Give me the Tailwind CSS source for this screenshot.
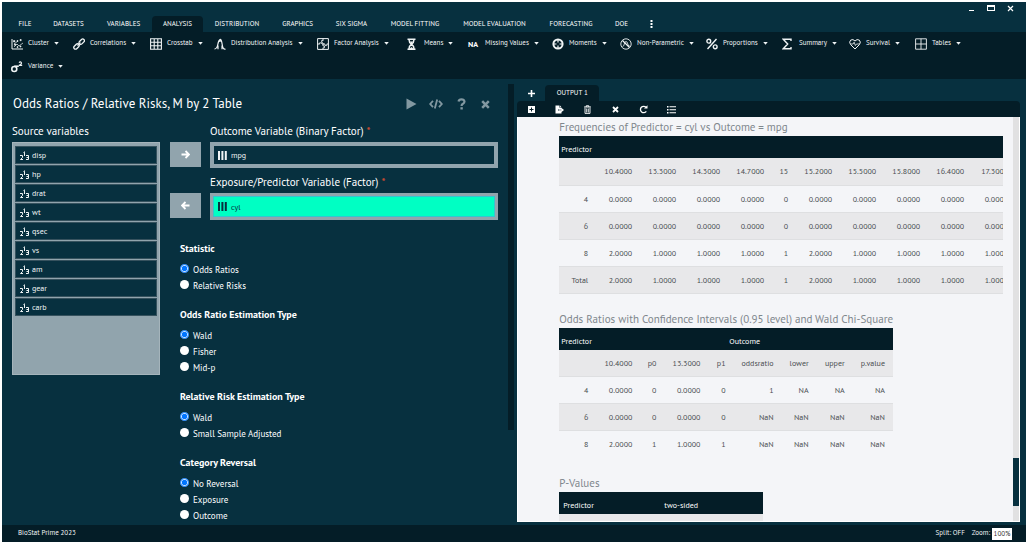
<!DOCTYPE html>
<html lang="en">
<head>
    <meta charset="UTF-8">
    <meta name="viewport" content="width=device-width, initial-scale=1.0">
    <title>BioStat Prime 2023</title>
    <script src="https://cdn.jsdelivr.net/npm/@tailwindcss/browser@4"></script>
</head>
<body class="h-screen overflow-hidden bg-white p-[2px] font-['PT_Sans','Noto_Sans',sans-serif] text-[#f0f4f5]">
    <!-- shared icons -->
    <svg class="hidden">
        <symbol id="caret" viewBox="0 0 6 4"><path d="M0 0h6L3 3.6z" fill="currentColor"/></symbol>
        <symbol id="num" viewBox="0 0 9 9"><g fill="none" stroke="currentColor" stroke-width="1"><path d="M3.500 1.500h1v3.500M4.500 .5v1"/><path d="M0 4.500h2.500v2L.5 8.500H3"/><path d="M6 4.500h2.500v4H6M6.500 6.500h2"/></g></symbol>
        <symbol id="bars" viewBox="0 0 9 9"><path d="M0 0h2v9H0zM3.4 0h2v9h-2zM6.8 0h2v9h-2z" fill="currentColor"/></symbol>
    </svg>
    <div class="flex h-full flex-col bg-[#07303f]">
        <header class="flex h-[30px] shrink-0 flex-col justify-between">
            <div class="flex h-3 items-center justify-end gap-3 pr-3 text-white">
                <button aria-label="Minimize" class="flex h-2 w-[6px] items-end"><span class="mb-px h-px w-[5px] bg-white"></span></button>
                <button aria-label="Maximize"><span class="block h-[6px] w-[8px] border border-t-2 border-white"></span></button>
                <button aria-label="Close"><svg class="h-[7px] w-[7px]" viewBox="0 0 7 7"><path d="M1 1l5 5M6 1L1 6" stroke="currentColor" stroke-width="1.2"/></svg></button>
            </div>
            <nav class="flex h-4 pl-[6px] text-[7px] font-medium text-white [&>button]:whitespace-nowrap">
                <button class="w-[34px]">FILE</button>
                <button class="w-[53px]">DATASETS</button>
                <button class="w-[57px]">VARIABLES</button>
                <button class="w-[51px] rounded-t-sm bg-[#041d27]">ANALYSIS</button>
                <button class="w-[68px]">DISTRIBUTION</button>
                <button class="w-[53px]">GRAPHICS</button>
                <button class="w-[55px]">SIX SIGMA</button>
                <button class="w-[72px]">MODEL FITTING</button>
                <button class="w-[87px]">MODEL EVALUATION</button>
                <button class="w-[66px]">FORECASTING</button>
                <button class="w-[35px]">DOE</button>
                <button aria-label="More" class="flex w-6 items-center justify-center"><svg class="h-2 w-[3px]" viewBox="0 0 3 8" fill="currentColor"><path d="M.5 0h2v2h-2zM.5 3h2v2h-2zM.5 6h2v2h-2z"/></svg></button>
            </nav>
        </header>

        <div class="flex shrink-0 flex-wrap bg-[#041d27] pb-px pl-[9px] text-[7px] font-medium [&>button]:flex [&>button]:h-[23px] [&>button]:items-center [&>button]:gap-[5px] [&>button]:whitespace-nowrap [&>button>svg:first-child]:h-3 [&>button>svg:first-child]:w-3 [&>button>svg:last-child]:h-[3px] [&>button>svg:last-child]:w-[5px]">
            <button class="w-[62px]"><svg viewBox="0 0 12 12" fill="none" stroke="currentColor"><path d="M1 1v10h11"/><path d="M3 9l3-3 2 2 4-3M3 6l4-3" stroke-width=".7"/><path d="M2.5 2.5h1.4v1.4H2.5zM6 2.5h1v1H6zM9 1.5h1.2v1.2H9zM3.4 6h1.2v1.2H3.4zM9 8h1v1H9zM6 8.6h1v1H6z" fill="currentColor" stroke-width=".6"/></svg><span>Cluster</span><svg><use href="#caret"/></svg></button>
            <button class="w-[77px]"><svg viewBox="0 0 12 12" fill="none" stroke="currentColor" stroke-width="1.3"><rect x="5.6" y="2" width="6.2" height="3.4" rx="1.7" transform="rotate(-45 8.7 3.7)"/><rect x=".4" y="6.8" width="6.2" height="3.4" rx="1.7" transform="rotate(-45 3.5 8.5)"/><path d="M4.5 7.6l3-3"/></svg><span>Correlations</span><svg><use href="#caret"/></svg></button>
            <button class="w-[64px]"><svg viewBox="0 0 12 12" fill="none" stroke="currentColor" stroke-width="1.1"><path d="M.6.8h10.8v10.4H.6zM.6 4.3h10.8M.6 7.8h10.8M4.2.8v10.4M7.8.8v10.4"/></svg><span>Crosstab</span><svg><use href="#caret"/></svg></button>
            <button class="w-[103px]"><svg viewBox="0 0 12 12" fill="none" stroke="currentColor" stroke-width="1.2"><path d="M.5 11q2.5-.2 3.3-4.5T6 1.500t2.200 5T11.500 11M6 2v2M4 7.500v3.800M8 7.500v3.800"/></svg><span>Distribution Analysis</span><svg><use href="#caret"/></svg></button>
            <button class="w-[90px]"><svg viewBox="0 0 12 12" fill="none" stroke="currentColor"><path d="M.6.6h10.8v10.8H.6zM6 .6v2.200M6 5v3M6 9.800v1.600M.6 6h2.200M5 6h3M9.800 6h1.600"/><path d="M6 2.500H4.600v1.800H6M8 6v1.600h1.800V6M6 8h1.500v1.800H6M2.600 6V4.800h1.800V6" stroke-width=".8"/></svg><span>Factor Analysis</span><svg><use href="#caret"/></svg></button>
            <button class="w-[59px]"><svg viewBox="0 0 12 12" fill="none" stroke="currentColor"><path d="M.5 1.200h8M.5 11.200h8" stroke-width="1.600"/><path d="M2 1.500q0 3 2.500 4.700Q7 4.500 7 1.500M2 11q0-3 2.500-4.800Q7 8 7 11" stroke-width="1.500"/><path d="M3 3.500h3L4.500 5.500zM2.500 11l2-2 2 2z" fill="currentColor" stroke="none"/></svg><span>Means</span><svg><use href="#caret"/></svg></button>
            <button class="w-[86px]"><b class="w-[14px] text-[8px] text-white">NA</b><span>Missing Values</span><svg class="w-[5px]!"><use href="#caret"/></svg></button>
            <button class="w-[68px]"><svg viewBox="0 0 12 12" fill="none" stroke="currentColor"><circle cx="6" cy="6" r="4.600" stroke-width="2"/><path d="M6 1v3.500M6 7.500V11M1 6h3.500M7.500 6H11" stroke-width="1.200"/></svg><span>Moments</span><svg><use href="#caret"/></svg></button>
            <button class="w-[86px]"><svg viewBox="0 0 12 12" fill="none" stroke="currentColor"><circle cx="6" cy="6" r="5.200" stroke-width=".9"/><path d="M2.500 2.500l7 7" stroke-width="1.200"/><path d="M2.500 8.500q1.500 0 1.800-2.500T6 3.500t1.800 2.500T9.800 8" stroke-width=".8"/></svg><span>Non-Parametric</span><svg><use href="#caret"/></svg></button>
            <button class="w-[76px]"><svg viewBox="0 0 12 12" fill="none" stroke="currentColor" stroke-width="1.400"><circle cx="2.800" cy="3.200" r="1.900"/><circle cx="9.200" cy="8.800" r="1.900"/><path d="M10.500 1l-9 10"/></svg><span>Proportions</span><svg><use href="#caret"/></svg></button>
            <button class="w-[67px]"><svg viewBox="0 0 12 12" fill="none" stroke="currentColor" stroke-width="1.400"><path d="M9 3V1.300H1.300L5.700 6l-4.400 4.700H9V9"/></svg><span>Summary</span><svg><use href="#caret"/></svg></button>
            <button class="w-[66px]"><svg viewBox="0 0 12 12" fill="none" stroke="currentColor"><path d="M6 11L1.500 6.500Q-.3 4 1.700 2.100 4 .6 6 3q2-2.400 4.300-.9Q12.300 4 10.500 6.500z"/><path d="M1.500 6h2.600l1-1.800 1.300 3.300L7.500 6h3" stroke-width=".8"/></svg><span>Survival</span><svg><use href="#caret"/></svg></button>
            <button class="w-[60px]"><svg viewBox="0 0 12 12" fill="none" stroke="currentColor" stroke-width=".9"><path d="M.6.800h10.800v10.400H.6zM.6 6h10.800M6 .8v10.400"/></svg><span>Tables</span><svg><use href="#caret"/></svg></button>
            <button class="w-[60px]"><svg viewBox="0 0 12 12" fill="none" stroke="currentColor"><circle cx="3.300" cy="8" r="2.500" stroke-width="1.600"/><path d="M3.300 5.200h4.500" stroke-width="1.600"/><path d="M8 1.600q1.400-1.300 2.300-.1T8 4.400h3.200" stroke-width="1.200"/></svg><span>Variance</span><svg><use href="#caret"/></svg></button>
        </div>

        <div class="flex min-h-0 flex-1">
            <!-- dialog -->
            <main class="flex min-w-0 flex-1 flex-col overflow-hidden pl-[10px]">
                <div class="mt-[13px] flex h-6 shrink-0 items-center justify-between pr-[17px] pl-px">
                    <h1 class="text-[13px] text-white">Odds Ratios / Relative Risks, M by 2 Table</h1>
                    <div class="flex items-center gap-3 text-[#8298a1]">
                        <button aria-label="Run"><svg class="h-3 w-[11px]" viewBox="0 0 11 12"><path d="M.5.500l10 5.500-10 5.500z" fill="currentColor"/></svg></button>
                        <button aria-label="Code"><svg class="h-[10px] w-[14px]" viewBox="0 0 14 10" fill="none" stroke="currentColor" stroke-width="1.800"><path d="M4 1.800L1.200 5 4 8.200M10 1.800L12.800 5 10 8.200M8.200.5l-2.400 9"/></svg></button>
                        <button aria-label="Help" class="w-3"><svg class="mx-auto h-3 w-[9px]" viewBox="0 0 9 12"><path d="M1.500 3.500Q2 1.300 4.500 1.300T7.500 3.600Q7.500 5 6 5.700T4.600 8" fill="none" stroke="currentColor" stroke-width="2.200"/><path d="M3.400 9.200h2.400v2.300H3.400z" fill="currentColor"/></svg></button>
                        <button aria-label="Close dialog" class="w-3"><svg class="mx-auto h-[9px] w-[9px]" viewBox="0 0 9 9"><path d="M1.200 1.200l6.600 6.600M7.800 1.200L1.200 7.800" stroke="currentColor" stroke-width="2.500"/></svg></button>
                    </div>
                </div>
                <div class="mt-[7px] flex min-h-0 flex-1 gap-[10px] pr-[10px]">
                    <section class="w-[148px] shrink-0">
                        <h2 class="h-[19px] text-[11px] leading-4 text-white">Source variables</h2>
                        <ul class="flex h-[233px] flex-col gap-px border border-[#a5b4bb] bg-[#91a4ad] p-[2px] pt-[3px] text-[8px] font-medium [&>li]:flex [&>li]:h-[18px] [&>li]:items-center [&>li]:gap-[3px] [&>li]:border [&>li]:border-[#36525e] [&>li]:bg-[#07303f] [&>li]:pl-1 [&_svg]:h-[9px] [&_svg]:w-[9px]">
                            <li><svg><use href="#num"/></svg>disp</li>
                            <li><svg><use href="#num"/></svg>hp</li>
                            <li><svg><use href="#num"/></svg>drat</li>
                            <li><svg><use href="#num"/></svg>wt</li>
                            <li><svg><use href="#num"/></svg>qsec</li>
                            <li><svg><use href="#num"/></svg>vs</li>
                            <li><svg><use href="#num"/></svg>am</li>
                            <li><svg><use href="#num"/></svg>gear</li>
                            <li><svg><use href="#num"/></svg>carb</li>
                        </ul>
                    </section>
                    <div class="flex min-w-0 flex-1 flex-col">
                        <div class="grid grid-cols-[31px_1fr] gap-x-[9px] gap-y-[6px]">
                            <button aria-label="Add outcome" class="mt-[19px] flex h-[25px] items-center justify-center bg-[#91a4ad] text-white"><svg class="h-[9px] w-[9px]" viewBox="0 0 9 9"><path d="M.5 4.500h7M4.500 1l3.500 3.500L4.500 8" fill="none" stroke="currentColor" stroke-width="1.800"/></svg></button>
                            <section>
                                <h2 class="h-[19px] text-[11px] leading-4 text-white">Outcome Variable (Binary Factor) <span class="text-[#e8502e]">*</span></h2>
                                <div class="border-4 border-[#91a4ad]"><div class="flex h-[18px] items-center gap-1 pl-1 text-[8px] font-medium"><svg class="h-[9px] w-[9px]"><use href="#bars"/></svg>mpg</div></div>
                            </section>
                            <button aria-label="Remove predictor" class="mt-[19px] flex h-[25px] items-center justify-center bg-[#91a4ad] text-white"><svg class="h-[9px] w-[9px]" viewBox="0 0 9 9"><path d="M8.500 4.500h-7M4.500 1L1 4.500 4.500 8" fill="none" stroke="currentColor" stroke-width="1.800"/></svg></button>
                            <section>
                                <h2 class="h-[19px] text-[11px] leading-4 text-white">Exposure/Predictor Variable (Factor) <span class="text-[#e8502e]">*</span></h2>
                                <div class="border-[3px] border-[#91a4ad]"><div class="flex h-[21px] items-center gap-1 border border-[#35c5d0] bg-[#00ffc3] pl-1 text-[8px] text-[#07303f]"><svg class="h-[9px] w-[9px]"><use href="#bars"/></svg>cyl</div></div>
                            </section>
                        </div>
                        <div class="mt-[22px] ml-[10px] flex flex-col gap-[14px] text-[9px] text-white [&_input]:-mt-1 [&_input]:h-[9px] [&_input]:w-[9px] [&_input]:accent-[#0075ff] [&_input:not(:checked)]:appearance-none [&_input:not(:checked)]:rounded-full [&_input:not(:checked)]:bg-white [&_label]:flex [&_label]:h-4 [&_label]:items-center [&_label]:gap-1 [&_legend]:mb-[6px] [&_legend]:text-[10px] [&_legend]:leading-[14px] [&_legend]:font-bold">
                            <fieldset>
                                <legend>Statistic</legend>
                                <label><input type="radio" name="stat" checked>Odds Ratios</label>
                                <label><input type="radio" name="stat">Relative Risks</label>
                            </fieldset>
                            <fieldset>
                                <legend>Odds Ratio Estimation Type</legend>
                                <label><input type="radio" name="or" checked>Wald</label>
                                <label><input type="radio" name="or">Fisher</label>
                                <label><input type="radio" name="or">Mid-p</label>
                            </fieldset>
                            <fieldset>
                                <legend>Relative Risk Estimation Type</legend>
                                <label><input type="radio" name="rr" checked>Wald</label>
                                <label><input type="radio" name="rr">Small Sample Adjusted</label>
                            </fieldset>
                            <fieldset>
                                <legend>Category Reversal</legend>
                                <label><input type="radio" name="rev" checked>No Reversal</label>
                                <label><input type="radio" name="rev">Exposure</label>
                                <label><input type="radio" name="rev">Outcome</label>
                            </fieldset>
                        </div>
                    </div>
                </div>
            </main>
            <div class="mt-[5px] mr-[3px] w-[6px]"><div class="h-[346px] bg-[#041d27]"></div></div>

            <!-- output -->
            <section class="mt-[6px] mr-[6px] mb-[3px] flex w-[49.1%] flex-col">
                <div class="flex h-4 shrink-0 items-stretch">
                    <button aria-label="New output" class="flex w-7 items-center justify-center text-white"><svg class="h-[7px] w-[7px]" viewBox="0 0 7 7"><path d="M3.500 0v7M0 3.500h7" stroke="currentColor" stroke-width="1.600"/></svg></button>
                    <button class="w-[54px] rounded-t-sm bg-[#041d27] text-[7px] font-medium text-white">OUTPUT 1</button>
                </div>
                <div class="flex h-4 shrink-0 items-center rounded-t-sm bg-[#041d27] text-white [&>button]:flex [&>button]:w-7 [&>button]:justify-center [&_svg]:h-[9px] [&_svg]:w-[9px]">
                    <button aria-label="Add"><svg viewBox="0 0 9 9"><path fill-rule="evenodd" d="M1 1h7v7H1zM4 2.500V4H2.500v1H4v1.500h1V5h1.500V4H5V2.500z" fill="currentColor"/></svg></button>
                    <button aria-label="Export"><svg viewBox="0 0 9 9" fill="currentColor"><path d="M.5.500h4v2.200h2V4H3.500v2h3v2.500h-6zM5 .5l1.500 1.700H5zM6.500 3L9 5 6.500 7V5.700H4V4.300h2.500z"/></svg></button>
                    <button aria-label="Delete"><svg viewBox="0 0 9 9" fill="none" stroke="currentColor"><path d="M1 2h7M3.200 2V.8h2.600V2" /><path d="M2 3v5.400h5V3M3.700 3.500v4M5.300 3.500v4" stroke-width=".9"/></svg></button>
                    <button aria-label="Clear"><svg viewBox="0 0 9 9"><path d="M2 2l5 5M7 2L2 7" stroke="currentColor" stroke-width="1.800"/></svg></button>
                    <button aria-label="Refresh"><svg viewBox="0 0 9 9" fill="none" stroke="currentColor" stroke-width="1.300"><path d="M7.300 6.300A3.200 3.200 0 1 1 7 2.300"/><path d="M5 3.600h3.500V.3z" fill="currentColor" stroke="none"/></svg></button>
                    <button aria-label="List"><svg viewBox="0 0 9 9" fill="currentColor"><path d="M0 1h1.500v1.500H0zM2.500 1.200H9v1H2.500zM0 4h1.500v1.500H0zM2.500 4.200H9v1H2.500zM0 7h1.500v1.500H0zM2.500 7.200H9v1H2.500z"/></svg></button>
                </div>
                <div class="flex min-h-0 flex-1 border border-t-0 border-white bg-[#f4f5f8]">
                    <div class="min-w-0 flex-1 overflow-hidden pr-[10px] pl-[41px] text-[#7f878d] [&_caption]:h-[19px] [&_caption]:pt-[2px] [&_caption]:text-left [&_caption]:text-[11px] [&_caption]:leading-[17px] [&_caption]:whitespace-nowrap [&_table]:table-fixed [&_table]:text-right [&_table]:text-[8px] [&_tbody]:text-[#4b4f52] [&_tbody_tr]:h-[27px] [&_tbody_tr]:border-b [&_tbody_tr]:border-[#dedfe1] [&_tbody_tr:nth-child(odd)]:bg-[#e8e8ea] [&_td]:pr-2 [&_th]:font-medium [&_thead]:bg-[#041d27] [&_thead]:text-[8px] [&_thead]:text-white [&_thead_tr]:h-[22px] [&_thead_th]:pt-1">
                        <div class="overflow-hidden">
                            <table class="w-[457px]">
                                <caption>Frequencies of Predictor = cyl vs Outcome = mpg</caption>
                                <colgroup><col class="w-[37px]"><col span="4" class="w-[44px]"><col class="w-6"><col span="5" class="w-[44px]"></colgroup>
                                <thead><tr><th colspan="11" class="pl-[2px] text-left">Predictor</th></tr></thead>
                                <tbody>
                                    <tr><td></td><td>10.4000</td><td>13.3000</td><td>14.3000</td><td>14.7000</td><td>15</td><td>15.2000</td><td>15.5000</td><td>15.8000</td><td>16.4000</td><td>17.3000</td></tr>
                                    <tr><td>4</td><td>0.0000</td><td>0.0000</td><td>0.0000</td><td>0.0000</td><td>0</td><td>0.0000</td><td>0.0000</td><td>0.0000</td><td>0.0000</td><td>0.0000</td></tr>
                                    <tr><td>6</td><td>0.0000</td><td>0.0000</td><td>0.0000</td><td>0.0000</td><td>0</td><td>0.0000</td><td>0.0000</td><td>0.0000</td><td>0.0000</td><td>0.0000</td></tr>
                                    <tr><td>8</td><td>2.0000</td><td>1.0000</td><td>1.0000</td><td>1.0000</td><td>1</td><td>2.0000</td><td>1.0000</td><td>1.0000</td><td>1.0000</td><td>1.0000</td></tr>
                                    <tr><td>Total</td><td>2.0000</td><td>1.0000</td><td>1.0000</td><td>1.0000</td><td>1</td><td>2.0000</td><td>1.0000</td><td>1.0000</td><td>1.0000</td><td>1.0000</td></tr>
                                </tbody>
                            </table>
                        </div>
                        <table class="mt-[15px] w-[333px]">
                            <caption>Odds Ratios with Confidence Intervals (0.95 level) and Wald Chi-Square</caption>
                            <colgroup><col class="w-[37px]"><col class="w-[44px]"><col class="w-6"><col class="w-[44px]"><col class="w-[25px]"><col class="w-[48px]"><col class="w-[35px]"><col class="w-9"><col class="w-10"></colgroup>
                            <thead><tr><th class="pl-[2px] text-left">Predictor</th><th colspan="8" class="text-center">Outcome</th></tr></thead>
                            <tbody>
                                <tr><td></td><td>10.4000</td><td>p0</td><td>13.3000</td><td>p1</td><td>oddsratio</td><td>lower</td><td>upper</td><td>p.value</td></tr>
                                <tr><td>4</td><td>0.0000</td><td>0</td><td>0.0000</td><td>0</td><td>1</td><td>NA</td><td>NA</td><td>NA</td></tr>
                                <tr><td>6</td><td>0.0000</td><td>0</td><td>0.0000</td><td>0</td><td>NaN</td><td>NaN</td><td>NaN</td><td>NaN</td></tr>
                                <tr class="border-none!"><td>8</td><td>2.0000</td><td>1</td><td>1.0000</td><td>1</td><td>NaN</td><td>NaN</td><td>NaN</td><td>NaN</td></tr>
                            </tbody>
                        </table>
                        <table class="mt-[15px] w-[204px]">
                            <caption>P-Values</caption>
                            <colgroup><col class="w-[40px]"><col></colgroup>
                            <thead><tr><th class="pl-1 text-left">Predictor</th><th class="text-center">two-sided</th></tr></thead>
                            <tbody><tr><td></td><td></td></tr></tbody>
                        </table>
                    </div>
                    <div class="flex w-[6px] flex-col bg-[#e1e1e2]"><div class="mt-[341px] h-12 bg-[#07303f]"></div></div>
                </div>
            </section>
        </div>

        <footer class="flex h-[17px] shrink-0 items-center justify-between bg-[#041d27] pr-[14px] pl-4 text-[7px] font-medium">
            <span>BioStat Prime 2023</span>
            <div class="flex items-center gap-[7px]">
                <span>Split: OFF</span>
                <label class="flex items-center gap-[2px]">Zoom:<input type="text" value="100%" class="h-3 w-5 bg-white text-center text-[7px] font-normal text-[#333]"></label>
            </div>
        </footer>
    </div>
</body>
</html>
